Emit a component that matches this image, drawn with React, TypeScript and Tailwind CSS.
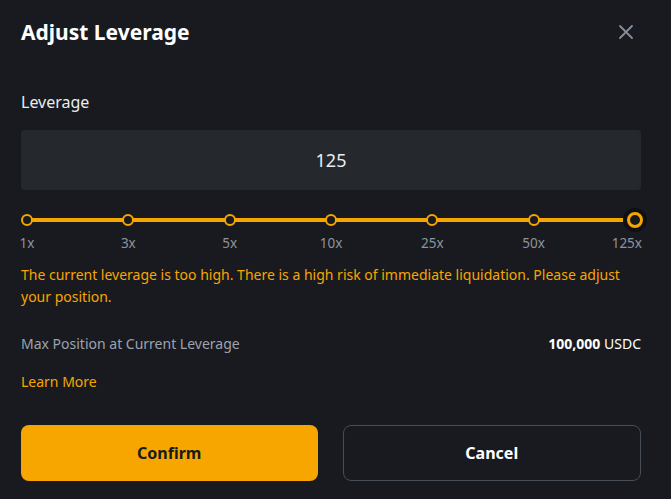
import React from "react";

const marks = ["1x", "3x", "5x", "10x", "25x", "50x", "125x"];

function CloseIcon() {
  return (
    <svg width="16" height="16" viewBox="0 0 16 16" fill="none">
      <path d="M2 2L14 14M14 2L2 14" stroke="#848e9c" strokeWidth="1.8" strokeLinecap="round" />
    </svg>
  );
}

function LeverageSlider() {
  return (
    <div className="px-[6px]">
      <div className="relative h-[24px]">
        <div className="absolute left-0 right-0 top-[10px] h-[4px] bg-[#f7a600]" />
        <div className="relative flex h-full items-center justify-between">
          {marks.map((m, i) => (
            <div key={m} className="relative h-full w-0">
              {i === marks.length - 1 ? (
                <div className="absolute left-[-12px] top-0 flex h-[24px] w-[24px] items-center justify-center rounded-full bg-[#0e1013]">
                  <div className="h-[16px] w-[16px] rounded-full border-[3px] border-[#f7a600] bg-[#181a1f]" />
                </div>
              ) : (
                <div className="absolute left-[-6px] top-[6px] h-[12px] w-[12px] rounded-full border-2 border-[#f7a600] bg-[#181a1f]" />
              )}
            </div>
          ))}
        </div>
      </div>
      <div className="relative mt-[3px] flex h-[16px] justify-between text-[13.5px] leading-[16px] text-[#8d949e]">
        {marks.map((m, i) => (
          <div key={m} className="relative w-0">
            <span
              className={
                i === marks.length - 1
                  ? "absolute right-[-7px] top-0 whitespace-nowrap"
                  : "absolute left-0 top-0 -translate-x-1/2 whitespace-nowrap"
              }
            >
              {m}
            </span>
          </div>
        ))}
      </div>
    </div>
  );
}

export default function App() {
  return (
    <div
      className="h-[499px] w-[671px] bg-[#181a1f] pl-[21px] pr-[30px] text-[#eaecef]"
      style={{ fontFamily: "'Noto Sans', Roboto, sans-serif" }}
    >
      <div className="flex h-[62px] items-center justify-between pt-[1px]">
        <h1 className="text-[21px] font-bold leading-[28px] text-white">Adjust Leverage</h1>
        <button className="mr-[7px] flex items-center justify-center">
          <CloseIcon />
        </button>
      </div>
      <div className="mt-[28px] text-[16px] leading-[24px] text-[#eaecef]">Leverage</div>
      <div className="mt-[16px] flex h-[60px] items-center justify-center rounded-[4px] bg-[#25282d] text-[18px] text-[#eaecef]">
        125
      </div>
      <div className="mt-[18px]">
        <LeverageSlider />
      </div>
      <p className="mt-[13px] text-[14px] leading-[22px] text-[#f7a600]">
        The current leverage is too high. There is a high risk of immediate liquidation. Please adjust your position.
      </p>
      <div className="mt-[26px] flex items-center justify-between text-[14px] leading-[20px]">
        <span className="text-[#9ca3af]">Max Position at Current Leverage</span>
        <span className="text-white">
          <span className="font-bold">100,000</span> USDC
        </span>
      </div>
      <div className="mt-[18px] text-[14px] leading-[20px] text-[#f7a600]">Learn More</div>
      <div className="mt-[33px] flex gap-[25px]">
        <button className="flex h-[56px] flex-1 items-center justify-center rounded-[8px] bg-[#f7a600] text-[16px] font-bold text-[#181a1f]">
          Confirm
        </button>
        <button className="flex h-[56px] flex-1 items-center justify-center rounded-[8px] border border-[#474d57] text-[16px] font-bold text-white">
          Cancel
        </button>
      </div>
    </div>
  );
}
